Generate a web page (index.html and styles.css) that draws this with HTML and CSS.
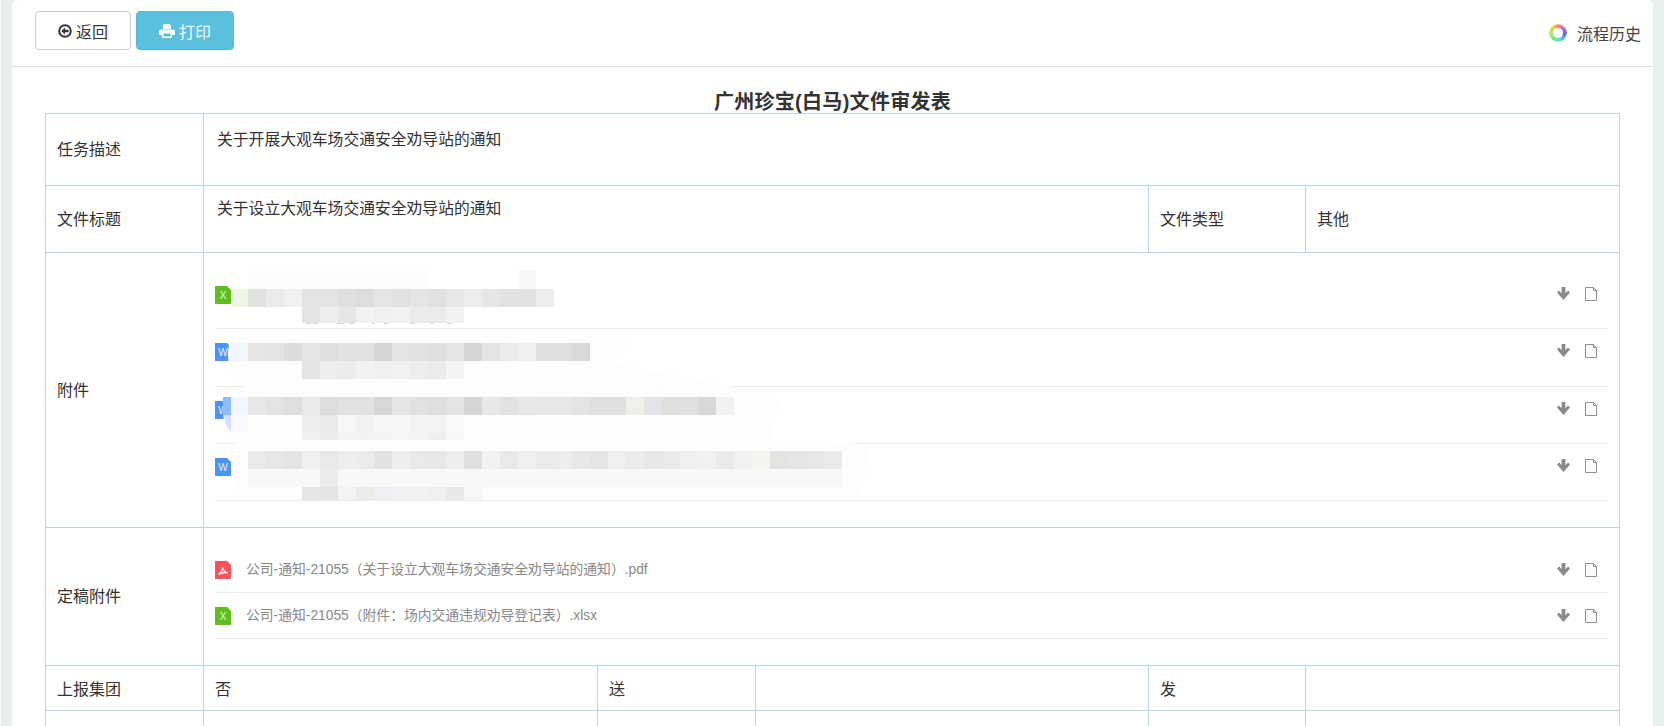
FILE: index.html
```html
<!DOCTYPE html>
<html lang="zh-CN">
<head>
<meta charset="utf-8">
<title>广州珍宝(白马)文件审发表</title>
<link rel="stylesheet" href="styles.css">
</head>
<body>
<svg class="defs" width="0" height="0">
  <symbol id="i-down" viewBox="0 0 13 13"><path d="M4.6 0h3.800v6.200l2.600-2.600 2 2L6.500 12.900 0 5.600l2-2 2.600 2.600z"/></symbol>
  <symbol id="i-doc" viewBox="0 0 12 14"><path class="doc-fill" d="M.5.5h8l3 3v10H.5z"/><path class="doc-line" d="M.5.5h8l3 3v10H.5zM8.500.5v3h3"/></symbol>
</svg>
<main class="page">
  <header class="toolbar">
    <div class="actions">
      <button class="btn btn-back" type="button">
        <svg class="btn-icon" viewBox="0 0 14 14"><circle cx="7" cy="7" r="5.800" fill="none" stroke="#333" stroke-width="2"/><path d="M3.300 7 7 3.600v2.200h3.600v2.400H7v2.200z" fill="#333"/></svg>
        <span>返回</span>
      </button>
      <button class="btn btn-print" type="button">
        <svg class="btn-icon print-icon" viewBox="0 0 16 14"><path fill="#fff" d="M4 0h6.500L12 1.500V5H4zM1.500 5.500h13A1.500 1.500 0 0 1 16 7v4h-3v3H3v-3H0V7a1.500 1.500 0 0 1 1.500-1.500zM4.500 9.500v3h7v-3z"/></svg>
        <span>打印</span>
      </button>
    </div>
    <a class="history"><i class="ring"></i><span>流程历史</span></a>
  </header>

  <h1 class="doc-title">广州珍宝(白马)文件审发表</h1>

  <table class="form">
    <colgroup><col class="c1"><col class="c2"><col class="c3"><col class="c4"><col class="c5"><col class="c6"></colgroup>
    <tr class="r-task">
      <td class="label-up">任务描述</td>
      <td class="top pt-task" colspan="5">关于开展大观车场交通安全劝导站的通知</td>
    </tr>
    <tr class="r-title">
      <td>文件标题</td>
      <td class="top pt-title" colspan="3">关于设立大观车场交通安全劝导站的通知</td>
      <td>文件类型</td>
      <td>其他</td>
    </tr>
    <tr class="r-attach">
      <td>附件</td>
      <td class="files-cell attach-cell" colspan="5">
        <ul class="files">
          <li class="file">
            <svg class="ficon" viewBox="0 0 16 18"><path fill="#5fbf1c" d="M0 0h12l4 4v14H0z"/><text x="8" y="13" class="fletter">X</text></svg>
            <span class="fname"></span>
            <span class="fact"><svg class="a-down"><use href="#i-down"/></svg><svg class="a-doc"><use href="#i-doc"/></svg></span>
          </li>
          <li class="file">
            <svg class="ficon" viewBox="0 0 16 18"><path fill="#4b94fb" d="M0 0h12l4 4v14H0z"/><text x="8" y="13" class="fletter">W</text></svg>
            <span class="fname"></span>
            <span class="fact"><svg class="a-down"><use href="#i-down"/></svg><svg class="a-doc"><use href="#i-doc"/></svg></span>
          </li>
          <li class="file">
            <svg class="ficon" viewBox="0 0 16 18"><path fill="#4b94fb" d="M0 0h12l4 4v14H0z"/><text x="8" y="13" class="fletter">W</text></svg>
            <span class="fname"></span>
            <span class="fact"><svg class="a-down"><use href="#i-down"/></svg><svg class="a-doc"><use href="#i-doc"/></svg></span>
          </li>
          <li class="file">
            <svg class="ficon" viewBox="0 0 16 18"><path fill="#4b94fb" d="M0 0h12l4 4v14H0z"/><text x="8" y="13" class="fletter">W</text></svg>
            <span class="fname"></span>
            <span class="fact"><svg class="a-down"><use href="#i-down"/></svg><svg class="a-doc"><use href="#i-doc"/></svg></span>
          </li>
        </ul>
        <svg class="mosaic" width="700" height="274" viewBox="204 253 700 274">
          <g fill="#fdfdfd">
            <path d="M240 330H618Q626 334 625 345L608 362 770 394 730 398H248L240 380Q228 372 228 355 228 335 240 330Z"/>
            <path d="M236 387H615L780 400 770 440 870 444 860 499H250Q234 490 234 470 234 452 250 445H236Q222 430 223 405Q225 392 236 387Z" />
          </g>
          <g fill="#fbfbfb"><rect x="248" y="271" width="180" height="18"/><rect x="518" y="271" width="18" height="18" fill="#f8f8f8"/></g>
          <rect x="231" y="289" width="17" height="18" fill="#eff6e6"/>
          <g id="m1">
            <rect x="248" y="289" width="18" height="18" fill="#e0e2e0"/><rect x="266" y="289" width="18" height="18" fill="#ebebe9"/><rect x="284" y="289" width="18" height="18" fill="#f1f1ef"/><rect x="302" y="289" width="18" height="18" fill="#e3e3e1"/><rect x="320" y="289" width="18" height="18" fill="#e5e4e2"/><rect x="338" y="289" width="18" height="18" fill="#dfdfdd"/><rect x="356" y="289" width="18" height="18" fill="#dddddb"/><rect x="374" y="289" width="18" height="18" fill="#e5e5e3"/><rect x="392" y="289" width="18" height="18" fill="#e1e1df"/><rect x="410" y="289" width="18" height="18" fill="#e5e5e3"/><rect x="428" y="289" width="18" height="18" fill="#e1e1df"/><rect x="446" y="289" width="18" height="18" fill="#e7e7e5"/><rect x="464" y="289" width="18" height="18" fill="#eeeeec"/><rect x="482" y="289" width="18" height="18" fill="#e6e6e4"/><rect x="500" y="289" width="18" height="18" fill="#e2e2e0"/><rect x="518" y="289" width="18" height="18" fill="#e2e2e0"/><rect x="536" y="289" width="18" height="18" fill="#ededed"/>
            <rect x="302" y="307" width="18" height="16" fill="#e3e3e3"/><rect x="320" y="307" width="18" height="16" fill="#eeeeee"/><rect x="338" y="307" width="18" height="16" fill="#e6e6e6"/><rect x="356" y="307" width="18" height="16" fill="#f1f2f2"/><rect x="374" y="307" width="18" height="16" fill="#efefef"/><rect x="392" y="307" width="18" height="16" fill="#f0f1f1"/><rect x="410" y="307" width="18" height="16" fill="#ebebeb"/><rect x="428" y="307" width="18" height="16" fill="#ebebeb"/><rect x="446" y="307" width="18" height="16" fill="#f1f2f4"/>
            <path d="M306 323.500h5M313 323.500h5M337 323.500h7M350 323.500h4M372 323.500h3M384 323.500h4M410 323.500h5M430 323.500h4M447 323.500h5" stroke="#d4d4d4" fill="none"/>
          </g>
          <rect x="231" y="343" width="17" height="18" fill="#f0f5ff"/>
          <g id="m2">
            <rect x="248" y="343" width="18" height="18" fill="#e5e5e3"/><rect x="266" y="343" width="18" height="18" fill="#e3e3e1"/><rect x="284" y="343" width="18" height="18" fill="#dcdcda"/><rect x="302" y="343" width="18" height="18" fill="#e5e5e5"/><rect x="320" y="343" width="18" height="18" fill="#dfdfdf"/><rect x="338" y="343" width="18" height="18" fill="#e2e2e0"/><rect x="356" y="343" width="18" height="18" fill="#e1e1df"/><rect x="374" y="343" width="18" height="18" fill="#d5d5d3"/><rect x="392" y="343" width="18" height="18" fill="#e3e3e1"/><rect x="410" y="343" width="18" height="18" fill="#e1e1df"/><rect x="428" y="343" width="18" height="18" fill="#dfdfdf"/><rect x="446" y="343" width="18" height="18" fill="#e5e5e5"/><rect x="464" y="343" width="18" height="18" fill="#d5d5d3"/><rect x="482" y="343" width="18" height="18" fill="#e3e3e1"/><rect x="500" y="343" width="18" height="18" fill="#eaeceb"/><rect x="518" y="343" width="18" height="18" fill="#f0efed"/><rect x="536" y="343" width="18" height="18" fill="#dfdfdd"/><rect x="554" y="343" width="18" height="18" fill="#dfdfdd"/><rect x="572" y="343" width="18" height="18" fill="#d9d9d7"/>
            <rect x="302" y="361" width="18" height="18" fill="#e3e3e3"/><rect x="320" y="361" width="18" height="18" fill="#eeeeee"/><rect x="338" y="361" width="18" height="18" fill="#ececec"/><rect x="356" y="361" width="18" height="18" fill="#f1f2f2"/><rect x="374" y="361" width="18" height="18" fill="#f0f0f0"/><rect x="392" y="361" width="18" height="18" fill="#f0f1f1"/><rect x="410" y="361" width="18" height="18" fill="#ecedec"/><rect x="428" y="361" width="18" height="18" fill="#ebebeb"/><rect x="446" y="361" width="18" height="18" fill="#f4f4f4"/>
          </g>
          <path d="M231 397V432Q225 425 223 412 223 402 231 397Z" fill="#cfe1ff"/>
          <rect x="223" y="397" width="8" height="18" fill="#90bcff"/>
          <rect x="231" y="397" width="17" height="18" fill="#f0f5ff"/>
          <rect x="231" y="415" width="17" height="16" fill="#f8faff"/>
          <g id="m3">
            <rect x="248" y="397" width="18" height="18" fill="#e7e7e5"/><rect x="266" y="397" width="18" height="18" fill="#e3e3e1"/><rect x="284" y="397" width="18" height="18" fill="#dfdfdd"/><rect x="302" y="397" width="18" height="18" fill="#eaeaea"/><rect x="320" y="397" width="18" height="18" fill="#dddddd"/><rect x="338" y="397" width="18" height="18" fill="#e2e2e0"/><rect x="356" y="397" width="18" height="18" fill="#e2e2e0"/><rect x="374" y="397" width="18" height="18" fill="#d7d7d5"/><rect x="392" y="397" width="18" height="18" fill="#e5e5e3"/><rect x="410" y="397" width="18" height="18" fill="#e2e2e0"/><rect x="428" y="397" width="18" height="18" fill="#dfdfdf"/><rect x="446" y="397" width="18" height="18" fill="#e3e3e3"/><rect x="464" y="397" width="18" height="18" fill="#d6d6d4"/><rect x="482" y="397" width="18" height="18" fill="#e8e8e6"/><rect x="500" y="397" width="18" height="18" fill="#e2e2e0"/><rect x="518" y="397" width="18" height="18" fill="#e8e8e6"/><rect x="536" y="397" width="18" height="18" fill="#e7e7e7"/><rect x="554" y="397" width="18" height="18" fill="#e7e7e7"/><rect x="572" y="397" width="18" height="18" fill="#e3e3e3"/><rect x="590" y="397" width="36" height="18" fill="#e0e0e0"/><rect x="626" y="397" width="18" height="18" fill="#f0f0ea"/><rect x="644" y="397" width="18" height="18" fill="#e3e3e8"/><rect x="662" y="397" width="18" height="18" fill="#dfdfdd"/><rect x="680" y="397" width="18" height="18" fill="#e0e0de"/><rect x="698" y="397" width="18" height="18" fill="#d8d8d6"/><rect x="716" y="397" width="18" height="18" fill="#f1f3f2"/>
            <rect x="302" y="415" width="18" height="18" fill="#eeeeee"/><rect x="320" y="415" width="18" height="18" fill="#e9e9e9"/><rect x="338" y="415" width="18" height="18" fill="#f6f7f6"/><rect x="356" y="415" width="18" height="18" fill="#f2f2f2"/><rect x="374" y="415" width="18" height="18" fill="#f6f6f6"/><rect x="392" y="415" width="18" height="18" fill="#f6f6f6"/><rect x="410" y="415" width="18" height="18" fill="#f3f3f3"/><rect x="428" y="415" width="18" height="18" fill="#f3f3f3"/><rect x="446" y="415" width="18" height="18" fill="#f9f9f9"/>
            <rect x="302" y="433" width="18" height="7" fill="#f0f0f0"/><rect x="320" y="433" width="18" height="7" fill="#ececec"/><rect x="338" y="433" width="18" height="7" fill="#f3f3f3"/><rect x="356" y="433" width="18" height="7" fill="#f3f3f5"/><rect x="374" y="433" width="18" height="7" fill="#f4f4f6"/><rect x="392" y="433" width="18" height="7" fill="#f5f5f5"/><rect x="410" y="433" width="18" height="7" fill="#f4f4f4"/><rect x="428" y="433" width="18" height="7" fill="#eeeeee"/><rect x="446" y="433" width="18" height="7" fill="#f7f7f7"/>
          </g>
          <g id="m4">
            <rect x="248" y="451" width="18" height="18" fill="#eaeaea"/><rect x="266" y="451" width="18" height="18" fill="#e7e7e7"/><rect x="284" y="451" width="18" height="18" fill="#e4e4e4"/><rect x="302" y="451" width="18" height="18" fill="#f0f0f0"/><rect x="320" y="451" width="18" height="18" fill="#e9e9e9"/><rect x="338" y="451" width="18" height="18" fill="#eeeeee"/><rect x="356" y="451" width="18" height="18" fill="#ececec"/><rect x="374" y="451" width="18" height="18" fill="#e2e2e0"/><rect x="392" y="451" width="18" height="18" fill="#eeeeee"/><rect x="410" y="451" width="18" height="18" fill="#e9e9e9"/><rect x="428" y="451" width="18" height="18" fill="#e8e8e8"/><rect x="446" y="451" width="18" height="18" fill="#ededed"/><rect x="464" y="451" width="18" height="18" fill="#dfdfdd"/><rect x="482" y="451" width="18" height="18" fill="#f2f2f2"/><rect x="500" y="451" width="18" height="18" fill="#e9e9e9"/><rect x="518" y="451" width="18" height="18" fill="#efefef"/><rect x="536" y="451" width="18" height="18" fill="#ebebeb"/><rect x="554" y="451" width="18" height="18" fill="#ededed"/><rect x="572" y="451" width="18" height="18" fill="#e8e8e8"/><rect x="590" y="451" width="18" height="18" fill="#e5e5e5"/><rect x="608" y="451" width="18" height="18" fill="#f0efed"/><rect x="626" y="451" width="18" height="18" fill="#ececec"/><rect x="644" y="451" width="18" height="18" fill="#e8e8e6"/><rect x="662" y="451" width="18" height="18" fill="#eaeae8"/><rect x="680" y="451" width="18" height="18" fill="#eef0f0"/><rect x="698" y="451" width="18" height="18" fill="#f1f1ef"/><rect x="716" y="451" width="18" height="18" fill="#eaeaec"/><rect x="734" y="451" width="18" height="18" fill="#f2f2f0"/><rect x="752" y="451" width="18" height="18" fill="#f4f4f0"/><rect x="770" y="451" width="18" height="18" fill="#e3e3e1"/><rect x="788" y="451" width="18" height="18" fill="#e5e5e3"/><rect x="806" y="451" width="18" height="18" fill="#e7e7e5"/><rect x="824" y="451" width="18" height="18" fill="#eaeae9"/>
            <rect x="248" y="469" width="594" height="18" fill="#f8f8f8"/><rect x="320" y="469" width="18" height="18" fill="#eaecec"/>
            <rect x="302" y="487" width="18" height="13" fill="#e5e5e5"/><rect x="320" y="487" width="18" height="13" fill="#e3e5e4"/><rect x="338" y="487" width="18" height="13" fill="#f2f3f3"/><rect x="356" y="487" width="18" height="13" fill="#ecebe9"/><rect x="374" y="487" width="18" height="13" fill="#eeeff2"/><rect x="392" y="487" width="18" height="13" fill="#f0f1f2"/><rect x="410" y="487" width="18" height="13" fill="#f0f1f2"/><rect x="428" y="487" width="18" height="13" fill="#eeeff0"/><rect x="446" y="487" width="18" height="13" fill="#e8e8e8"/><rect x="464" y="487" width="18" height="13" fill="#f6f7f6"/>
          </g>
        </svg>
      </td>
    </tr>
    <tr class="r-final">
      <td class="label-up">定稿附件</td>
      <td class="files-cell final-cell" colspan="5">
        <ul class="files">
          <li class="file file-final">
            <svg class="ficon" viewBox="0 0 16 18"><path fill="#f9545a" d="M0 0h12l4 4v14H0z"/><path fill="none" stroke="#fff" stroke-width="1.200" d="M3.500 13.500C6 12 8 8.500 7.800 6.200 7.700 9 10 11.500 12.500 11.800 10 11.500 6 12 3.500 13.500Z"/></svg>
            <span class="fname">公司-通知-21055（关于设立大观车场交通安全劝导站的通知）.pdf</span>
            <span class="fact"><svg class="a-down"><use href="#i-down"/></svg><svg class="a-doc"><use href="#i-doc"/></svg></span>
          </li>
          <li class="file file-final">
            <svg class="ficon" viewBox="0 0 16 18"><path fill="#5fbf1c" d="M0 0h12l4 4v14H0z"/><text x="8" y="13" class="fletter">X</text></svg>
            <span class="fname">公司-通知-21055（附件：场内交通违规劝导登记表）.xlsx</span>
            <span class="fact"><svg class="a-down"><use href="#i-down"/></svg><svg class="a-doc"><use href="#i-doc"/></svg></span>
          </li>
        </ul>
      </td>
    </tr>
    <tr class="r-report">
      <td>上报集团</td>
      <td>否</td>
      <td>送</td>
      <td></td>
      <td>发</td>
      <td></td>
    </tr>
    <tr class="r-next">
      <td></td><td></td><td></td><td></td><td></td><td></td>
    </tr>
  </table>
</main>
</body>
</html>
```
FILE: styles.css
```css
* { box-sizing: border-box; }

html, body { margin: 0; padding: 0; }

body {
  height: 726px;
  overflow: hidden;
  background: #e9eeee;
  border-left: 1px solid #fbfdfd;
  color: #333;
  font-family: "Liberation Sans", "Noto Sans CJK SC", sans-serif;
  font-size: 16px;
}

.defs { position: absolute; }

.page {
  margin: 0 11px 0 11px;
  height: 726px;
  overflow: hidden;
  background: #fff;
  border-radius: 5px 5px 0 0;
}

.toolbar {
  height: 67px;
  border-bottom: 1px solid #dcdfe1;
  display: flex;
  justify-content: space-between;
  padding: 11px 12px 0 23px;
}

.actions { display: flex; gap: 5px; }

.btn {
  height: 39px;
  border-radius: 4px;
  border: 1px solid #ccc;
  background: #fff;
  color: #333;
  font: inherit;
  display: flex;
  align-items: center;
  justify-content: center;
  gap: 4px;
  padding: 0;
}

.btn-back { width: 96px; }

.btn-print {
  width: 98px;
  background: #5bc0de;
  border-color: #54bbda;
  color: #f2fafd;
}

.btn-icon { width: 14px; height: 14px; }
.print-icon { width: 16px; }

.history {
  display: flex;
  align-items: center;
  height: 43px;
  gap: 10px;
  color: #444;
}

.ring {
  width: 18px;
  height: 18px;
  border-radius: 50%;
  background: conic-gradient(#f98a6c 0deg, #c766d8 50deg, #6a5cf0 95deg, #45c0f5 140deg, #5fe8c8 175deg, #74ea76 215deg, #b7ea62 275deg, #f0d048 325deg, #f98a6c 360deg);
  -webkit-mask: radial-gradient(circle, transparent 4.400px, #000 5.600px);
  mask: radial-gradient(circle, transparent 4.400px, #000 5.600px);
}

.doc-title {
  margin: 0;
  height: 46px;
  padding-top: 22px;
  text-align: center;
  font-size: 20px;
  line-height: 26px;
  letter-spacing: .3px;
  font-weight: 700;
  color: #333;
}

.form {
  width: 1574px;
  margin-left: 33px;
  border-collapse: collapse;
  table-layout: fixed;
}

.c1 { width: 158px; }
.c2 { width: 394px; }
.c3 { width: 158px; }
.c4 { width: 393px; }
.c5 { width: 157px; }
.c6 { width: 314px; }

.form td {
  border: 1px solid #bcd2ee;
  padding: 2px 11px 0;
  vertical-align: middle;
  line-height: 24px;
}

.form .label-up { padding-top: 0; }
.form .top { vertical-align: top; padding-left: 13px; font-size: 15.800px; }
.form .pt-task { padding-top: 14px; }
.form .pt-title { padding-top: 11px; }
.r-report td { padding-top: 4px; }

.r-task { height: 72px; }
.r-title { height: 67px; }
.r-attach { height: 275px; }
.r-final { height: 138px; }
.r-report { height: 45px; }
.r-next { height: 60px; }

.form .files-cell { vertical-align: top; }
.form .attach-cell { position: relative; padding-top: 19px; }
.form .final-cell { padding-top: 19px; }

.files { list-style: none; margin: 0; padding: 0; }

.file {
  height: 57.330px;
  padding-top: 14px;
  border-bottom: 1px solid #e9ebec;
  display: flex;
  align-items: flex-start;
}

.file-final {
  height: 46px;
  padding-top: 14px;
}

.file-final .fname { margin-top: 0; }
.file-final .fact { padding-top: 2px; }

.ficon { width: 16px; height: 18px; flex: none; }

.fletter {
  fill: #e8f6dc;
  font-size: 10px;
  font-weight: 400;
  text-anchor: middle;
}

.fname {
  flex: 1;
  margin-left: 15px;
  margin-top: -1px;
  font-size: 13.800px;
  line-height: 18px;
  color: #888;
}

.fact {
  display: flex;
  align-items: flex-start;
  gap: 15px;
  margin-right: 11px;
  padding-top: 1px;
}

.a-down { width: 13px; height: 13px; fill: #8a8a8a; }
.a-doc { width: 12px; height: 14px; }
.doc-fill { fill: #fbfdff; }
.doc-line { fill: none; stroke: #8f8f8f; stroke-width: 1; }

.mosaic {
  position: absolute;
  left: 0;
  top: 0;
  pointer-events: none;
}
```
